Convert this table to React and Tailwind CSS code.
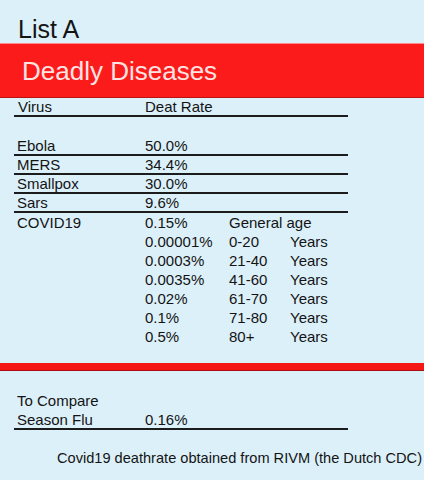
import React from "react";

const font = { fontFamily: '"Liberation Sans", Arial, sans-serif' };

function Row({ a, b, c, d, line, h = "leading-[19px]" }) {
  return (
    <div
      className={
        "flex pl-[3px] " +
        (line ? "border-b-2 border-[#1c1c1c] pt-[1px] leading-[16px]" : h)
      }
    >
      <div className="w-[128px] shrink-0">{a}</div>
      <div className="w-[84px] shrink-0">{b}</div>
      <div className="w-[61px] shrink-0">{c}</div>
      <div>{d}</div>
    </div>
  );
}

export default function App() {
  const ages = [
    ["0.00001%", "0-20"],
    ["0.0003%", "21-40"],
    ["0.0035%", "41-60"],
    ["0.02%", "61-70"],
    ["0.1%", "71-80"],
    ["0.5%", "80+"],
  ];
  return (
    <div
      className="w-[424px] h-[480px] overflow-hidden bg-[#dcf0fa] text-[#141414]"
      style={font}
    >
      <div className="pt-[15px] pl-[18px] text-[25px] leading-[28px]">List A</div>
      <div className="h-[55px] bg-[#fb1b1b] border-t border-[#ff8c8c] border-b border-b-[#b81212] pt-[12px] pl-[22px] text-[26px] leading-[30px] text-[#ffe3e3]">
        Deadly Diseases
      </div>
      <div className="ml-[14px] w-[334px] text-[15px]">
        <div className="flex pl-[4px] leading-[17px] border-b-2 border-[#1c1c1c]">
          <div className="w-[127px] shrink-0">Virus</div>
          <div>Deat Rate</div>
        </div>
        <div className="h-[20px]" />
        <Row a="Ebola" b="50.0%" line />
        <Row a="MERS" b="34.4%" line />
        <Row a="Smallpox" b="30.0%" line />
        <Row a="Sars" b="9.6%" line />
        <Row a="COVID19" b="0.15%" c={<span className="whitespace-nowrap">General age</span>} />
        {ages.map(([r, g]) => (
          <Row key={g} a="" b={r} c={g} d="Years" />
        ))}
      </div>
      <div className="mt-[17px] h-[8px] bg-[#f51616] border-b border-[#a81010]" />
      <div className="ml-[14px] w-[334px] text-[15px] mt-[20px]">
        <Row a="To Compare" h="leading-[20px]" />
        <Row a="Season Flu" b="0.16%" line />
      </div>
      <div className="mt-[19px] pl-[57px] text-[14.6px] leading-[18px] whitespace-nowrap">
        Covid19 deathrate obtained from RIVM (the Dutch CDC)
      </div>
    </div>
  );
}
